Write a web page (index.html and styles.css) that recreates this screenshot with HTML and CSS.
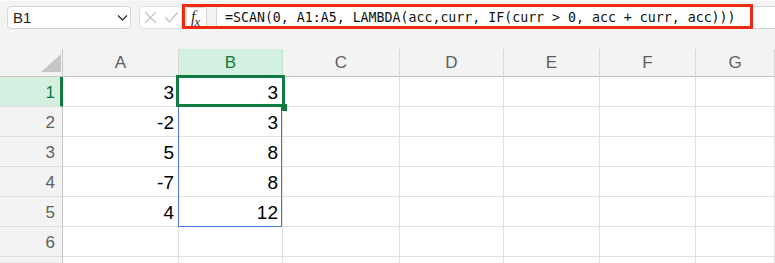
FILE: index.html
```html
<!DOCTYPE html>
<html lang="en">
<head>
  <meta charset="UTF-8">
  <meta name="viewport" content="width=device-width, initial-scale=1.0">
  <title>SCAN</title>
  <link rel="stylesheet" href="styles.css">
</head>
<body>

<div class="toolbar">
  <div class="namebox">
    <span>B1</span>
    <svg class="chevron" width="11" height="6" viewBox="0 0 11 6"><path d="M1 0.5 L5.5 5 L10 0.5" fill="none" stroke="#333" stroke-width="1.3"/></svg>
  </div>
  <div class="actions">
    <svg width="13" height="13" viewBox="0 0 13 13"><path d="M1 1 L12 12 M12 1 L1 12" stroke="#c4c4c4" stroke-width="1.3"/></svg>
    <svg width="13" height="11" viewBox="0 0 13 11"><path d="M0.5 5.5 L4.5 10 L12.5 0.5" fill="none" stroke="#c4c4c4" stroke-width="1.3"/></svg>
  </div>
  <div class="fxbtn"><i>f</i><sub>x</sub></div>
  <div class="formula">=SCAN(0, A1:A5, LAMBDA(acc,curr, IF(curr &gt; 0, acc + curr, acc)))</div>
  <div class="highlight"></div>
</div>

<div class="sheet">
  <div class="corner"><span class="triangle"></span></div>
  <div class="colhead">A</div>
  <div class="colhead active">B</div>
  <div class="colhead">C</div>
  <div class="colhead">D</div>
  <div class="colhead">E</div>
  <div class="colhead">F</div>
  <div class="colhead">G</div>

  <div class="rowhead active">1</div>
  <div class="cell">3</div><div class="cell">3</div><div class="cell"></div><div class="cell"></div><div class="cell"></div><div class="cell"></div><div class="cell"></div>

  <div class="rowhead">2</div>
  <div class="cell">-2</div><div class="cell">3</div><div class="cell"></div><div class="cell"></div><div class="cell"></div><div class="cell"></div><div class="cell"></div>

  <div class="rowhead">3</div>
  <div class="cell">5</div><div class="cell">8</div><div class="cell"></div><div class="cell"></div><div class="cell"></div><div class="cell"></div><div class="cell"></div>

  <div class="rowhead">4</div>
  <div class="cell">-7</div><div class="cell">8</div><div class="cell"></div><div class="cell"></div><div class="cell"></div><div class="cell"></div><div class="cell"></div>

  <div class="rowhead">5</div>
  <div class="cell">4</div><div class="cell">12</div><div class="cell"></div><div class="cell"></div><div class="cell"></div><div class="cell"></div><div class="cell"></div>

  <div class="rowhead">6</div>
  <div class="cell"></div><div class="cell"></div><div class="cell"></div><div class="cell"></div><div class="cell"></div><div class="cell"></div><div class="cell"></div>

  <!-- partial row at the bottom edge, number not visible -->
  <div class="rowhead"></div>
  <div class="cell"></div><div class="cell"></div><div class="cell"></div><div class="cell"></div><div class="cell"></div><div class="cell"></div><div class="cell"></div>

  <!-- selection overlays -->
  <div class="range"></div>
  <div class="selection"></div>
  <div class="handle"></div>
</div>

</body>
</html>
```

FILE: styles.css
```css
body {
  margin: 0;
  padding: 0;
  background-color: #f3f3f3;
  font-family: "Liberation Sans", Arial, sans-serif;
  overflow: hidden;
}
.toolbar {
  position: relative;
  display: flex;
  align-items: flex-start;
  height: 49px;
  box-sizing: border-box;
  padding: 5px 0 0 7px;
  border-top: 1px solid #fafafa;
}
.namebox {
  display: flex;
  align-items: center;
  justify-content: space-between;
  width: 124px;
  height: 23px;
  box-sizing: border-box;
  padding: 0 2px 0 5px;
  background-color: #fff;
  border: 1px solid #d6d6d6;
  border-radius: 4px;
  font-size: 15px;
  color: #222;
}
.actions {
  display: flex;
  align-items: center;
  gap: 8px;
  width: 43px;
  height: 23px;
  box-sizing: border-box;
  margin-left: 8px;
  padding-left: 4px;
  background-color: #fff;
  border: 1px solid #e0e0e0;
  border-radius: 4px;
}
.fxbtn {
  width: 21px;
  height: 22px;
  box-sizing: border-box;
  margin: 1px 0 0 4px;
  padding: 0 0 0 4px;
  background-color: #fff;
  border: 1px solid #d6d6d6;
  border-radius: 3px;
  font-family: "Liberation Serif", serif;
  font-size: 16px;
  line-height: 17px;
  color: #333;
}
.fxbtn sub {
  font-size: 13px;
  font-style: italic;
  vertical-align: -4px;
  margin-left: -1px;
}
.formula {
  flex: 1;
  height: 23px;
  box-sizing: border-box;
  margin-left: 9px;
  padding-left: 8px;
  background-color: #fff;
  border: 1px solid #d6d6d6;
  border-right: none;
  border-radius: 4px 0 0 4px;
  font-family: "DejaVu Sans Mono", monospace;
  font-size: 13.25px;
  line-height: 21px;
  color: #111;
  white-space: nowrap;
}
.highlight {
  position: absolute;
  left: 182px;
  top: 3px;
  width: 571px;
  height: 25px;
  box-sizing: border-box;
  border: 3px solid #ee2a12;
}
.sheet {
  position: relative;
  display: grid;
  grid-template-columns: 63px 116px 104px 117px 104px 96px 96px 1fr;
  grid-template-rows: 28px repeat(7, 30px);
}
.corner {
  position: relative;
  box-sizing: border-box;
  border-right: 1px solid #c8c8c8;
  border-bottom: 1px solid #c4c4c4;
}
.triangle {
  position: absolute;
  right: 1px;
  bottom: 4px;
  width: 0;
  height: 0;
  border-left: 20px solid transparent;
  border-bottom: 18px solid #c6c6c6;
}
.colhead {
  box-sizing: border-box;
  border-right: 1px solid #d8d8d8;
  border-bottom: 1px solid #c4c4c4;
  text-align: center;
  font-size: 17px;
  line-height: 27px;
  color: #5f5f5f;
}
.colhead.active {
  background-color: #d3f0e0;
  color: #107c41;
  border-right-color: #bfe4cf;
}
.rowhead {
  box-sizing: border-box;
  padding: 2px 7px 0 0;
  border-right: 1px solid #c8c8c8;
  border-bottom: 1px solid #dcdcdc;
  text-align: right;
  font-size: 17px;
  line-height: 27px;
  color: #5f5f5f;
}
.rowhead.active {
  background-color: #d3f0e0;
  color: #107c41;
  border-right: 3px solid #107c41;
  padding-right: 5px;
}
.cell {
  box-sizing: border-box;
  padding: 2px 4px 0 0;
  background-color: #fff;
  border-right: 1px solid #e1e1e1;
  border-bottom: 1px solid #e1e1e1;
  text-align: right;
  font-size: 19px;
  line-height: 27px;
  color: #000;
}
.range {
  position: absolute;
  left: 178px;
  top: 56px;
  width: 104px;
  height: 122px;
  box-sizing: border-box;
  border: 1px solid #3f7ad8;
}
.selection {
  position: absolute;
  left: 176px;
  top: 26px;
  width: 109px;
  height: 32px;
  box-sizing: border-box;
  border: 3px solid #107c41;
}
.handle {
  position: absolute;
  left: 281px;
  top: 55px;
  width: 6px;
  height: 7px;
  background-color: #107c41;
}
```
